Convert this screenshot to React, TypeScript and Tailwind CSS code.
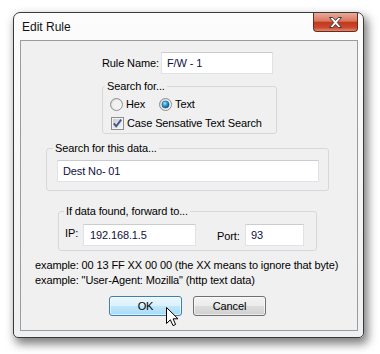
const font = "font-['Liberation_Sans',Arial,sans-serif]";
const input =
  'h-[22px] bg-white border border-[#dfe2e6] border-t-[#c9ccd1] flex items-center text-[#101040] shrink-0';

function Radio({ checked }: { checked?: boolean }) {
  return (
    <svg width="13" height="13" viewBox="0 0 13 13" className="shrink-0">
      <defs>
        <linearGradient id="rOuter" x1="0" y1="0" x2="1" y2="1">
          <stop offset="0" stopColor="#d2d2d2" />
          <stop offset="1" stopColor="#fdfdfd" />
        </linearGradient>
        <radialGradient id="rDot" cx="0.4" cy="0.35" r="0.7">
          <stop offset="0" stopColor="#9fe6ff" />
          <stop offset="0.5" stopColor="#2a97d0" />
          <stop offset="1" stopColor="#0b3f6b" />
        </radialGradient>
      </defs>
      <circle cx="6.5" cy="6.5" r="6" fill="url(#rOuter)" stroke="#8c8e90" />
      <circle cx="6.5" cy="6.5" r="4.3" fill="#f1f1f1" />
      {checked && <circle cx="6.5" cy="6.5" r="3.6" fill="url(#rDot)" stroke="#1b5f8c" strokeWidth="0.6" />}
    </svg>
  );
}

function Check() {
  return (
    <svg width="13" height="13" viewBox="0 0 13 13" className="shrink-0">
      <defs>
        <linearGradient id="cIn" x1="0" y1="0" x2="1" y2="1">
          <stop offset="0" stopColor="#cbcbcb" />
          <stop offset="1" stopColor="#f6f6f6" />
        </linearGradient>
      </defs>
      <rect x="0.5" y="0.5" width="12" height="12" fill="#f4f4f4" stroke="#8c8e90" />
      <rect x="2" y="2" width="9" height="9" fill="url(#cIn)" />
      <path d="M2.8 6.4 L5.2 9.2 L10.2 2.6" fill="none" stroke="#42558e" strokeWidth="1.9" />
    </svg>
  );
}

function Cursor() {
  return (
    <svg width="13" height="20" viewBox="0 0 13 20" className="absolute left-[56px] top-[10px]">
      <path
        d="M0.5 0.5 L0.5 16.5 L4.4 12.8 L7 18.6 L9.6 17.5 L7.1 11.8 L12 11.8 Z"
        fill="#fff"
        stroke="#000"
        strokeLinejoin="round"
      />
    </svg>
  );
}

function CloseGlyph() {
  return (
    <svg width="13" height="11" viewBox="0 0 13 11">
      <path
        d="M0.5 0.5 L3.8 0.5 L6.5 3.4 L9.2 0.5 L12.5 0.5 L8.3 5.5 L12.5 10.5 L9.2 10.5 L6.5 7.6 L3.8 10.5 L0.5 10.5 L4.7 5.5 Z"
        fill="#fff"
        stroke="#3d3d3d"
        strokeLinejoin="round"
      />
    </svg>
  );
}

export default function App() {
  return (
    <div className={`w-[380px] h-[354px] bg-white pl-[13px] pt-[12px] text-[11px] tracking-[-0.12px] text-black ${font}`}>
      <div className="relative w-[351px] h-[326px] border border-[#3a3a3a] rounded-t-[7px] rounded-b-[5px] bg-[linear-gradient(to_bottom,#fcfcfc,#eff0f1)] shadow-[3px_5px_10px_1px_rgba(0,0,0,0.5)]">
        {/* title bar */}
        <div className="h-[27px] flex items-center pl-[8px] text-[12px] tracking-normal text-[#111]">Edit Rule</div>
        <button className="absolute top-0 right-[5px] w-[45px] h-[19px] flex items-center justify-center border border-t-0 border-[#6b2a1c] rounded-b-[4px] bg-[linear-gradient(to_bottom,#eaa899_0%,#da7760_45%,#c4391d_52%,#c9482c_80%,#e08a72_100%)]">
          <CloseGlyph />
        </button>

        {/* client area */}
        <div className="ml-[6px] w-[338px] h-[291px] border border-[#9c9c9c] bg-[#f0f0f0] flex flex-col">
          <div className="mt-[11px] pl-[81px] flex items-center">
            <span className="w-[59px]">Rule Name:</span>
            <div className={`${input} w-[112px] pl-[5px]`}>F/W - 1</div>
          </div>

          <fieldset className="mt-[5px] ml-[81px] w-[175px] border border-[#d5d9dd] rounded-[3px]">
            <legend className="ml-[2px] px-[2px] leading-[14px]">Search for...</legend>
            <div className="pl-[7px] pt-[4px] pb-[3px] flex flex-col gap-[5px]">
              <div className="flex items-center h-[14px]">
                <div className="w-[49px] flex items-center gap-[3px]">
                  <Radio />
                  <span>Hex</span>
                </div>
                <div className="flex items-center gap-[3px]">
                  <Radio checked />
                  <span>Text</span>
                </div>
              </div>
              <div className="flex items-center h-[14px] gap-[3px] ml-[1px]">
                <Check />
                <span>Case Sensative Text Search</span>
              </div>
            </div>
          </fieldset>

          <fieldset className="mt-[7px] ml-[25px] w-[283px] border border-[#d5d9dd] rounded-[3px]">
            <legend className="ml-[6px] px-[2px] leading-[14px]">Search for this data...</legend>
            <div className="pl-[10px] pt-[5px] pb-[8px]">
              <div className={`${input} w-[262px] h-[21px] pl-[5px]`}>Dest No- 01</div>
            </div>
          </fieldset>

          <fieldset className="mt-[13px] ml-[37px] w-[259px] border border-[#d5d9dd] rounded-[3px]">
            <legend className="ml-[5px] px-[2px] leading-[14px]">If data found, forward to...</legend>
            <div className="pl-[6px] pt-[6px] pb-[4px] flex items-center">
              <span className="w-[18px] mb-[3px]">IP:</span>
              <div className={`${input} w-[113px] pl-[6px]`}>192.168.1.5</div>
              <span className="ml-[21px] w-[28px] mt-[3px]">Port:</span>
              <div className={`${input} w-[59px] pl-[5px]`}>93</div>
            </div>
          </fieldset>

          <div className="mt-[7px] pl-[14px] leading-[15px]">
            <p>example: 00 13 FF XX 00 00 (the XX means to ignore that byte)</p>
            <p>example: "User-Agent: Mozilla" (http text data)</p>
          </div>

          <div className="mt-[8px] pl-[88px] flex gap-[11px]">
            <button className="relative w-[73px] h-[20px] border border-[#3c7fb1] rounded-[3px] bg-[linear-gradient(to_bottom,#ecf7fd_0%,#dbf1fc_48%,#bfe7fd_52%,#a9daf5_100%)] shadow-[inset_0_0_0_1px_rgba(255,255,255,0.6)]">
              OK
              <Cursor />
            </button>
            <button className="w-[73px] h-[20px] border border-[#707070] rounded-[3px] bg-[linear-gradient(to_bottom,#f3f3f3_0%,#ebebeb_48%,#dddddd_52%,#cfcfcf_100%)] shadow-[inset_0_0_0_1px_rgba(255,255,255,0.6)]">
              Cancel
            </button>
          </div>
        </div>
      </div>
    </div>
  );
}
